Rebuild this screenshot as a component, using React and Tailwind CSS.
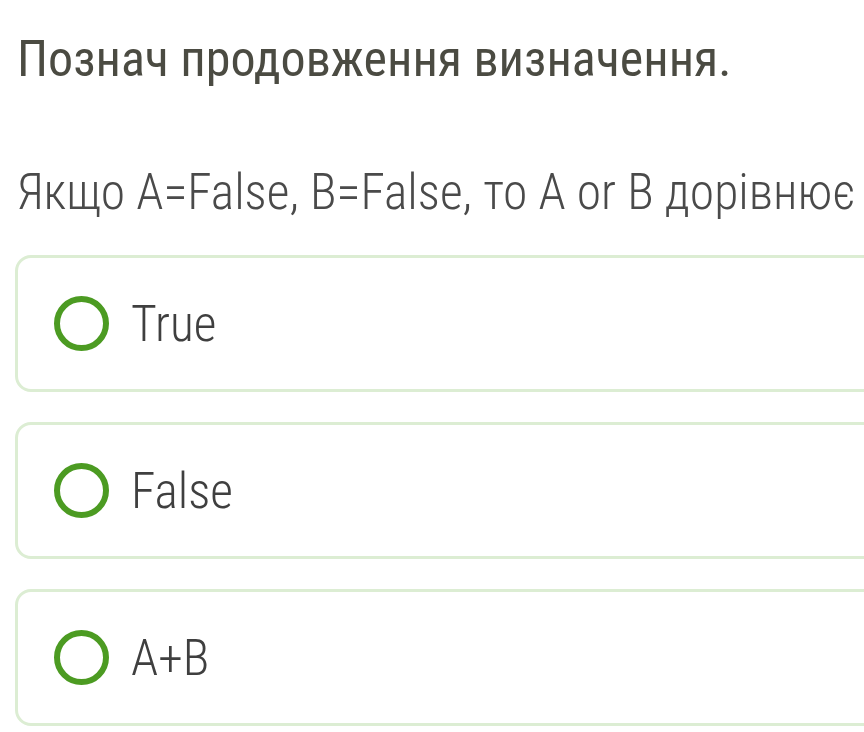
import React from "react";

const options = ["True", "False", "A+B"];

export default function App() {
  return (
    <div className="w-[864px] h-[732px] overflow-hidden bg-white">
      <div className="pl-[17px] pt-[29px]">
        <h1 className="font-['Roboto_Condensed'] text-[50px] leading-[60px] font-normal text-[#4b4b42] whitespace-nowrap">
          Познач продовження визначення.
        </h1>
        <p className="font-['Roboto_Condensed'] mt-[74px] text-[49.5px] leading-[58px] font-light text-[#4a4a4a] whitespace-nowrap">
          Якщо A=False, B=False, то A or B дорівнює
        </p>
      </div>
      <div className="mt-[34px] ml-[15px] flex flex-col gap-[30px] w-[900px]">
        {options.map((o) => (
          <div
            key={o}
            className="h-[137px] rounded-[16px] border-[3px] border-[#dcedd3] bg-white flex items-center pl-[36px] gap-[22px]"
          >
            <span className="w-[55px] h-[55px] rounded-full border-[6px] border-[#4c9b22] shrink-0" />
            <span className="font-['Roboto_Condensed'] text-[49.5px] leading-[58px] font-light text-[#3f3f3f] whitespace-nowrap">
              {o}
            </span>
          </div>
        ))}
      </div>
    </div>
  );
}
